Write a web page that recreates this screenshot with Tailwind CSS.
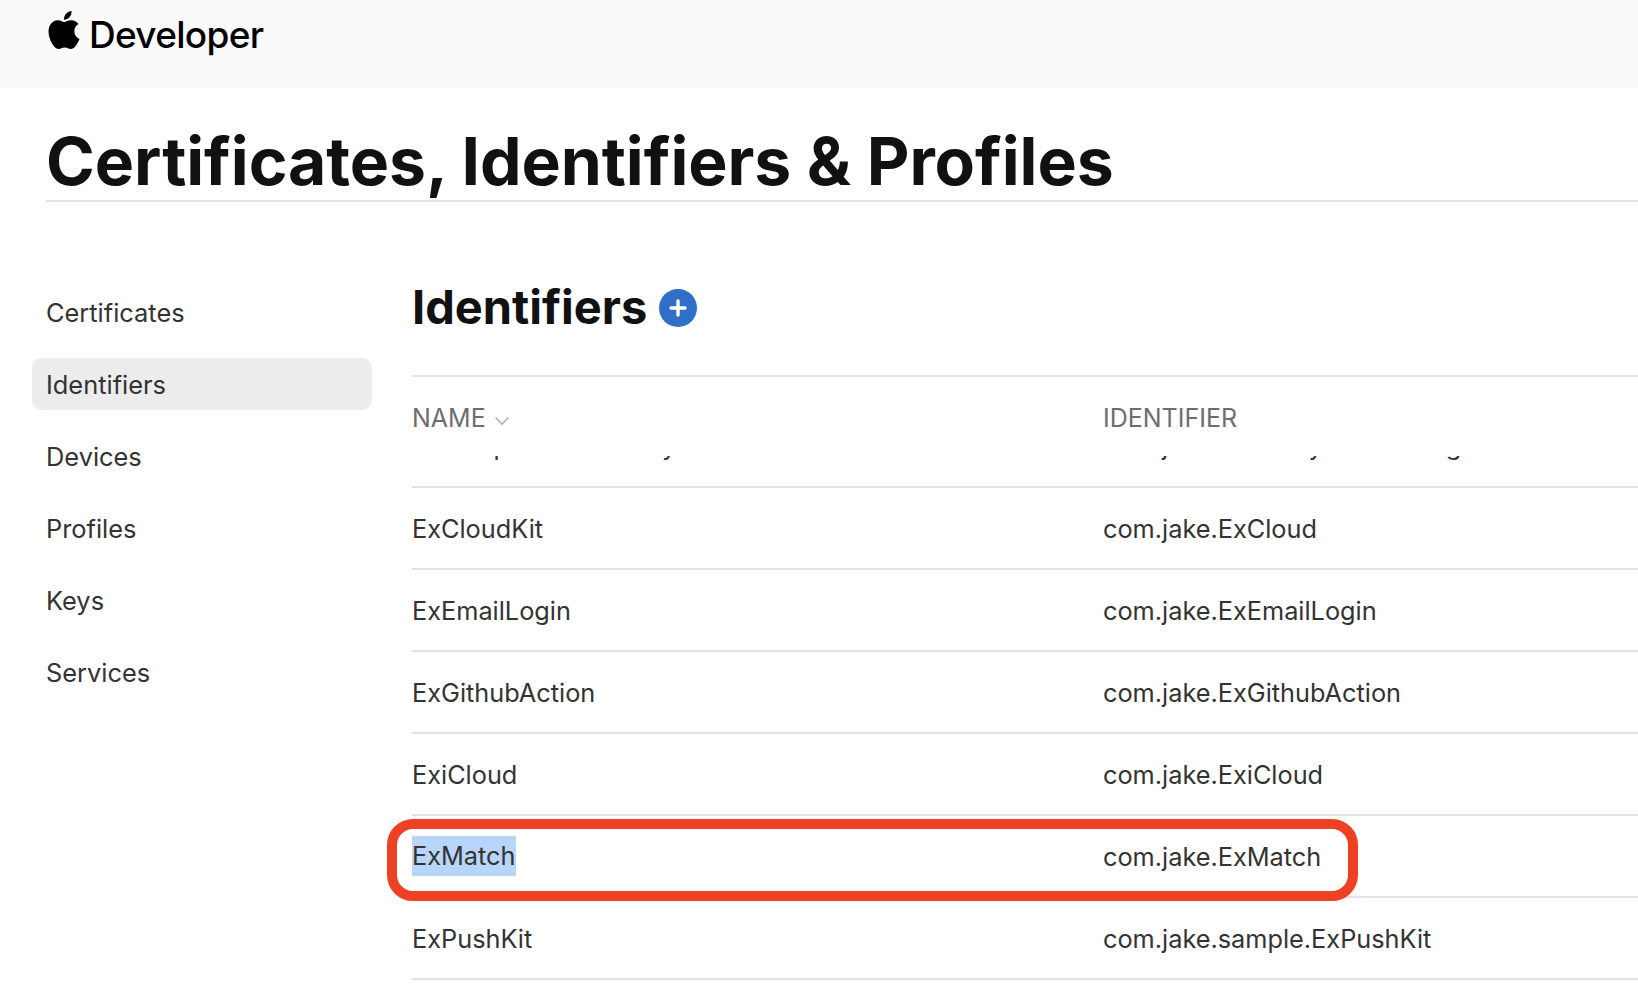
<!DOCTYPE html>
<html lang="en">
<head>
    <meta charset="UTF-8">
    <meta name="viewport" content="width=device-width, initial-scale=1.0">
    <title>Certificates, Identifiers &amp; Profiles</title>
    <script src="https://cdn.jsdelivr.net/npm/@tailwindcss/browser@4"></script>
</head>
<body class="bg-white h-[998px] overflow-hidden font-['Inter',sans-serif] text-[#333]">
    <!-- Top bar -->
    <header class="h-[88px] bg-[#fafafa] pl-[45px] pt-[11px] flex items-start">
        <svg class="w-[38px] h-[38px] fill-black" viewBox="0 0 24 24"><path d="M12.152 6.896c-.948 0-2.415-1.078-3.96-1.04-2.04.027-3.91 1.183-4.961 3.014-2.117 3.675-.546 9.103 1.519 12.09 1.013 1.454 2.208 3.09 3.792 3.039 1.52-.065 2.09-.987 3.935-.987 1.831 0 2.35.987 3.96.948 1.637-.026 2.676-1.48 3.676-2.948 1.156-1.688 1.636-3.325 1.662-3.415-.039-.013-3.182-1.221-3.22-4.857-.026-3.04 2.48-4.494 2.597-4.559-1.429-2.09-3.623-2.324-4.39-2.376-2-.156-3.675 1.09-4.61 1.09zM15.53 3.83c.843-1.012 1.4-2.427 1.245-3.83-1.207.052-2.662.805-3.532 1.818-.78.896-1.454 2.338-1.273 3.714 1.338.104 2.715-.688 3.559-1.701"/></svg>
        <span class="ml-[6px] mt-[1px] text-[37px] leading-[46px] font-medium text-black tracking-[-0.7px]">Developer</span>
    </header>

    <div class="ml-[46px] h-[114px] border-b-2 border-[#e3e3e3] flex items-end">
        <h1 class="text-[66px] leading-[80px] font-bold text-[#111] tracking-[-0.06px] mb-[-1px]">Certificates, Identifiers &amp; Profiles</h1>
    </div>

    <div class="flex mt-[65px]">
        <!-- Sidebar -->
        <nav class="w-[340px] ml-[32px] shrink-0 mt-[19px] flex flex-col gap-[20px] text-[25.4px]">
            <a class="h-[52px] px-[14px] pt-[2px] flex items-center rounded-[10px]">Certificates</a>
            <a class="h-[52px] px-[14px] pt-[2px] flex items-center rounded-[10px] bg-[#ececec]">Identifiers</a>
            <a class="h-[52px] px-[14px] pt-[2px] flex items-center rounded-[10px]">Devices</a>
            <a class="h-[52px] px-[14px] pt-[2px] flex items-center rounded-[10px]">Profiles</a>
            <a class="h-[52px] px-[14px] pt-[2px] flex items-center rounded-[10px]">Keys</a>
            <a class="h-[52px] px-[14px] pt-[2px] flex items-center rounded-[10px]">Services</a>
        </nav>

        <!-- Main -->
        <main class="flex-1 ml-[40px] relative">
            <div class="h-[110px] border-b-2 border-[#e3e3e3] flex items-start pt-[10px]">
                <h2 class="text-[47px] leading-[60px] font-bold text-[#111]">Identifiers</h2>
                <span class="ml-[12px] mt-[12px] w-[38px] h-[38px] rounded-full bg-[#2f6fc7] flex items-center justify-center">
                    <svg class="w-[20px] h-[20px]" viewBox="0 0 20 20"><path d="M10 3v14M3 10h14" stroke="#fff" stroke-width="3.4" stroke-linecap="round"/></svg>
                </span>
            </div>

            <div class="flex items-center h-[79px] pt-[4px] text-[25px] text-[#6e6e6e]">
                <div class="w-[691px] flex items-center">NAME
                    <svg class="ml-[8px] mt-[4px] w-[16px] h-[10px]" viewBox="0 0 16 10"><path d="M1.5 1.5 8 8l6.5-6.5" fill="none" stroke="#b0b0b0" stroke-width="1.6"/></svg>
                </div>
                <div>IDENTIFIER</div>
            </div>

            <!-- Scrolled list: first row is cut off by the sticky header -->
            <div class="text-[25.3px]">
                <div class="h-[32px] overflow-hidden border-b-2 border-[#e3e3e3] flex items-end">
                    <div class="h-[82px] w-full shrink-0 pt-[1px] flex items-center"><div class="w-[691px]">ExSampleNetworkKey</div><div>com.jake.ExHeavyNetworking</div></div>
                </div>
                <div class="h-[82px] pt-[1px] flex items-center border-b-2 border-[#e3e3e3]"><div class="w-[691px]">ExCloudKit</div><div>com.jake.ExCloud</div></div>
                <div class="h-[82px] pt-[1px] flex items-center border-b-2 border-[#e3e3e3]"><div class="w-[691px]">ExEmailLogin</div><div>com.jake.ExEmailLogin</div></div>
                <div class="h-[82px] pt-[1px] flex items-center border-b-2 border-[#e3e3e3]"><div class="w-[691px]">ExGithubAction</div><div>com.jake.ExGithubAction</div></div>
                <div class="h-[82px] pt-[1px] flex items-center border-b-2 border-[#e3e3e3]"><div class="w-[691px]">ExiCloud</div><div>com.jake.ExiCloud</div></div>
                <div class="h-[82px] pt-[1px] flex items-center border-b-2 border-[#e3e3e3]"><div class="w-[691px] mt-[-1px]"><span class="inline-block bg-[#b8d5fb] leading-[40px]">ExMatch</span></div><div>com.jake.ExMatch</div></div>
                <div class="h-[82px] pt-[1px] flex items-center border-b-2 border-[#e3e3e3]"><div class="w-[691px]">ExPushKit</div><div>com.jake.sample.ExPushKit</div></div>
            </div>

            <!-- Annotation drawn over the selected row -->
            <div class="absolute left-[-25px] top-[552px] w-[971px] h-[82px] border-[10px] border-[#ee4023] rounded-[26px]"></div>
        </main>
    </div>
</body>
</html>
